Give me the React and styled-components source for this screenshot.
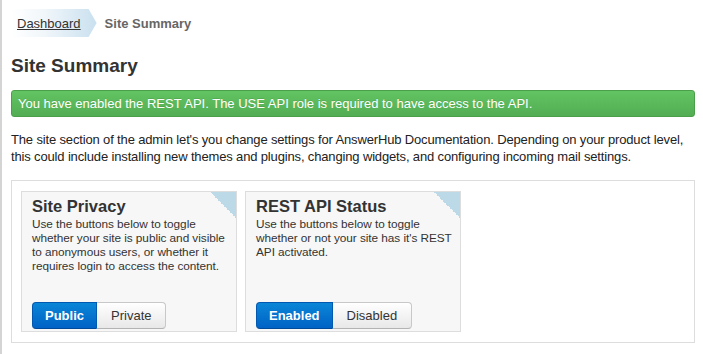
import styled, { createGlobalStyle } from "styled-components";

const GlobalStyle = createGlobalStyle`
    html, body {
        margin: 0;
        padding: 0;
        background: #fff;
    }
    body {
        font-family: "Liberation Sans", Arial, Helvetica, sans-serif;
        color: #333;
    }
`

const cards = [
    {
        title: "Site Privacy",
        text: "Use the buttons below to toggle whether your site is public and visible to anonymous users, or whether it requires login to access the content.",
        options: ["Public", "Private"],
        active: 0,
    },
    {
        title: "REST API Status",
        text: "Use the buttons below to toggle whether or not your site has it's REST API activated.",
        options: ["Enabled", "Disabled"],
        active: 0,
    },
];

const App = () => {
    return (
        <Page>
            <GlobalStyle />
            <Crumbs>
                <CrumbLink href="#">Dashboard</CrumbLink>
                <CrumbCurrent>Site Summary</CrumbCurrent>
            </Crumbs>

            <Title>Site Summary</Title>
            <Alert>You have enabled the REST API. The USE API role is required to have access to the API.</Alert>

            <Intro>
                The site section of the admin let's you change settings for AnswerHub Documentation. Depending on your product level,
                <br />
                this could include installing new themes and plugins, changing widgets, and configuring incoming mail settings.
            </Intro>

            <Panel>
                {cards.map((card) => (
                    <Card key={card.title}>
                        <CardTitle>{card.title}</CardTitle>
                        <CardText>{card.text}</CardText>
                        <ButtonGroup>
                            {card.options.map((opt, i) => (
                                <ToggleButton key={opt} $active={i === card.active}>
                                    {opt}
                                </ToggleButton>
                            ))}
                        </ButtonGroup>
                    </Card>
                ))}
            </Panel>
        </Page>
    );
}

export default App;

const Page = styled.div`
    min-height: 354px;
    box-sizing: border-box;
    border-left: 2px solid #d4d4d4;
    padding: 9px 8px 0 9px;
`

const Crumbs = styled.nav`
    display: flex;
    align-items: center;
    height: 28px;
    font-size: 13px;
`

const CrumbLink = styled.a`
    display: flex;
    align-items: center;
    height: 28px;
    padding: 0 16px 0 6px;
    color: #333;
    text-decoration: underline;
    background: linear-gradient(to right, #ffffff 0%, #f0f6fa 40%, #c9e0ef 100%);
    clip-path: polygon(0 0, calc(100% - 8px) 0, 100% 50%, calc(100% - 8px) 100%, 0 100%);
`

const CrumbCurrent = styled.span`
    margin-left: 8px;
    font-weight: bold;
    color: #666;
`

const Title = styled.h2`
    margin: 18px 0 0;
    font-size: 19px;
    line-height: 22px;
    font-weight: bold;
    color: #333;
`

const Alert = styled.div`
    margin-top: 13px;
    height: 27px;
    box-sizing: border-box;
    padding: 0 6px;
    border: 1px solid #4b9f4b;
    border-radius: 3px;
    background: linear-gradient(to bottom, #62c462, #53ad53);
    color: #fff;
    font-size: 13px;
    line-height: 25px;
    text-shadow: 0 -1px 0 rgba(0, 0, 0, 0.1);
`

const Intro = styled.p`
    margin: 14px 0 15px;
    font-size: 13px;
    line-height: 17px;
    letter-spacing: -0.15px;
    white-space: nowrap;
    color: #222;
`

const Panel = styled.div`
    display: flex;
    gap: 8px;
    padding: 10px 9px;
    border: 1px solid #ddd;
`

const Card = styled.div`
    display: flex;
    flex-direction: column;
    width: 216px;
    height: 141px;
    box-sizing: border-box;
    padding: 4px 8px 2px 10px;
    border: 1px solid #ddd;
    background:
        linear-gradient(45deg, transparent 50%, #bcd9e8 50%) no-repeat top right / 26px 26px,
        #f7f7f7;
`

const CardTitle = styled.div`
    font-size: 16.5px;
    line-height: 20px;
    font-weight: bold;
    color: #333;
`

const CardText = styled.div`
    margin-top: 1px;
    font-size: 11.8px;
    line-height: 14px;
    letter-spacing: -0.05px;
    color: #333;
`

const ButtonGroup = styled.div`
    display: flex;
    margin-top: auto;
`

const ToggleButton = styled.button`
    height: 27px;
    padding: 0 ${(p) => (p.$active ? "12px" : "14px")};
    font-family: inherit;
    font-size: 13px;
    line-height: 25px;
    font-weight: ${(p) => (p.$active ? "bold" : "normal")};
    color: ${(p) => (p.$active ? "#fff" : "#333")};
    background: ${(p) =>
        p.$active
            ? "linear-gradient(to bottom, #0a86d6, #0062c6)"
            : "linear-gradient(to bottom, #ffffff, #e8e8e8)"};
    border: 1px solid ${(p) => (p.$active ? "#0058b0" : "#c8c8c8")};
    border-bottom-color: ${(p) => (p.$active ? "#004a99" : "#b3b3b3")};
    cursor: pointer;

    &:first-child {
        border-radius: 4px 0 0 4px;
    }
    &:last-child {
        border-radius: 0 4px 4px 0;
        border-left: none;
    }
`
